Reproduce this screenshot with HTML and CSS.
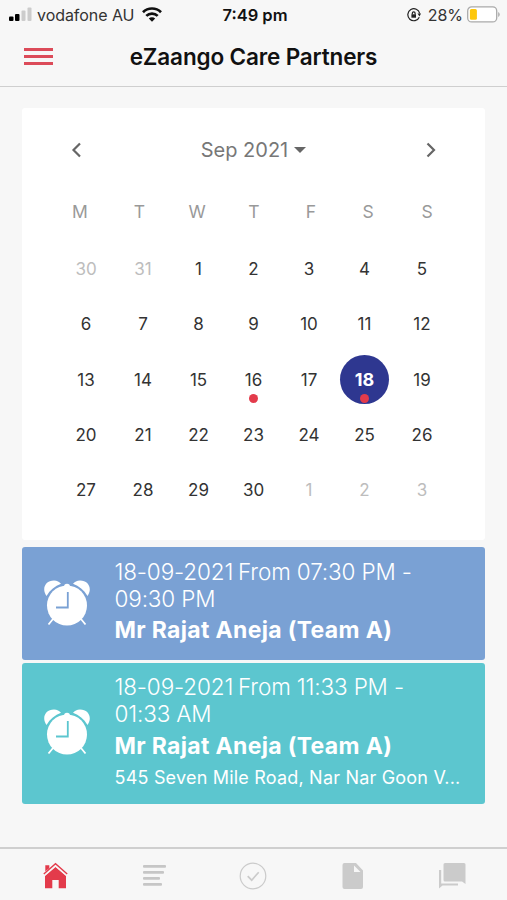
FILE: index.html
```html
<!DOCTYPE html>
<html lang="en">
<head>
<meta charset="utf-8">
<title>eZaango Care Partners</title>
<link rel="stylesheet" href="styles.css">
</head>
<body>
<svg class="defs" width="0" height="0" aria-hidden="true">
  <symbol id="alarm" viewBox="0 0 48 48">
    <path fill="#fff" d="M3.500 16C-1.500 9 2 .5 11 .5c3 0 5.500 1.300 7 3.300C12 6 7 10 3.500 16zM44.500 16C49.500 9 46 .5 37 .5c-3 0-5.500 1.300-7 3.300C36 6 41 10 44.500 16z"/>
    <circle cx="24" cy="25.500" r="20" fill="#fff"/>
    <path fill="#fff" d="M21 6.700a3 3 0 0 1 6 0z"/>
    <path stroke="#fff" stroke-width="1.800" fill="none" d="M10 39l-4.500 5.500M38 39l4.500 5.500"/>
    <path stroke="currentColor" stroke-width="1.800" fill="none" d="M24.800 12v15.500H13"/>
  </symbol>
</svg>
<div class="status">
  <div class="carrier">
    <svg width="24" height="15" viewBox="0 0 24 15"><rect x="0" y="9.500" width="4.500" height="4.500" rx="1"/><rect x="6" y="7" width="4.500" height="7" rx="1"/><rect x="12.500" y="3.500" width="4" height="10.500" rx="1" fill="#ccc"/><rect x="18.500" y=".5" width="4" height="13.500" rx="1" fill="#ccc"/></svg>
    <span class="carrier-name">vodafone AU</span>
    <svg width="20" height="15" viewBox="0 0 20 15" fill="none" stroke="#111" stroke-width="2.700"><path d="M1 5.200a12.800 12.800 0 0 1 18 0M4.300 8.900a8.100 8.100 0 0 1 11.400 0"/><path stroke="none" fill="#111" d="M6.800 11.500a4.600 4.600 0 0 1 6.400 0L10 14.800z"/></svg>
  </div>
  <span class="time">7:49 pm</span>
  <div class="power">
    <svg width="14" height="14" viewBox="0 0 14 14" fill="none" stroke="#222" stroke-width="1.200"><path d="M12.300 9.200A6 6 0 1 1 12.700 5.500"/><path d="M10.500 5.500h3.500l-1.500 3z" fill="#222" stroke="none"/><path d="M5.300 6.500V5.300a1.400 1.400 0 0 1 2.800 0v1.200"/><rect x="4.400" y="6.300" width="4.600" height="3.400" fill="#222" stroke="none"/></svg>
    <span class="percent">28%</span>
    <svg class="battery" width="34" height="17" viewBox="0 0 34 17"><rect x=".7" y=".9" width="29" height="15" rx="4" fill="#fff" stroke="#aaa" stroke-width="1.300"/><rect x="2.900" y="3.100" width="7" height="10.600" rx="1.500" fill="#fdc70c"/><path d="M31.200 6v5q1.500-.8 1.500-2.500T31.200 6z" fill="#aaa"/></svg>
  </div>
</div>
<header class="nav">
  <div class="menu"><i></i><i></i><i></i></div>
  <h1>eZaango Care Partners</h1>
</header>
<main>
  <section class="calendar">
    <div class="month">
      <svg width="12" height="18" viewBox="0 0 12 18" class="chev"><path d="M10 2.500L3.500 9l6.500 6.500"/></svg>
      <div class="month-name"><span>Sep 2021</span><svg width="12" height="6" viewBox="0 0 12 6"><path d="M0 0h12L6 6z" fill="#666"/></svg></div>
      <svg width="12" height="18" viewBox="0 0 12 18" class="chev"><path d="M2.500 2.500L9 9l-6.500 6.500"/></svg>
    </div>
    <div class="week"><span>M</span><span>T</span><span>W</span><span>T</span><span>F</span><span>S</span><span>S</span></div>
    <div class="days">
      <span class="out">30</span><span class="out">31</span><span>1</span><span>2</span><span>3</span><span>4</span><span>5</span>
      <span>6</span><span>7</span><span>8</span><span>9</span><span>10</span><span>11</span><span>12</span>
      <span>13</span><span>14</span><span>15</span><span class="marked">16</span><span>17</span><span class="marked"><b>18</b></span><span>19</span>
      <span>20</span><span>21</span><span>22</span><span>23</span><span>24</span><span>25</span><span>26</span>
      <span>27</span><span>28</span><span>29</span><span>30</span><span class="out">1</span><span class="out">2</span><span class="out">3</span>
    </div>
  </section>
  <article class="event blue">
    <svg class="alarm" width="48" height="48"><use href="#alarm"/></svg>
    <div class="info">
      <p class="when"><span class="date">18-09-2021</span> From 07:30 PM -<br>09:30 PM</p>
      <p class="who">Mr Rajat Aneja (Team A)</p>
    </div>
  </article>
  <article class="event teal">
    <svg class="alarm" width="48" height="48"><use href="#alarm"/></svg>
    <div class="info">
      <p class="when"><span class="date">18-09-2021</span> From 11:33 PM -<br>01:33 AM</p>
      <p class="who">Mr Rajat Aneja (Team A)</p>
      <p class="where">545 Seven Mile Road, Nar Nar Goon V...</p>
    </div>
  </article>
</main>
<nav class="tabs">
  <svg width="26" height="28" viewBox="0 0 26 28" fill="#e33b4b"><path d="M3.300 9.500V3.300h4v3zM13.500 5L24 14v12.200h-7.300V18h-6.400v8.200H3V14z"/><path fill="none" stroke="#f7f7f7" stroke-width="2.600" d="M2 12.800L13.500 2.900 25 12.800"/><path fill="none" stroke="#e33b4b" stroke-width="1.400" d="M1.800 12L13.500 1.800 25.200 12"/></svg>
  <svg width="26" height="28" viewBox="0 0 26 28" fill="#c6c6c6"><rect x="2" y="3" width="23" height="2.700" rx="1"/><rect x="2" y="9" width="21" height="2.700" rx="1"/><rect x="2" y="15" width="17" height="2.700" rx="1"/><rect x="2" y="21" width="19" height="2.700" rx="1"/></svg>
  <svg width="28" height="28" viewBox="0 0 28 28" fill="none" stroke="#cbcbcb"><circle cx="14" cy="14" r="12.800" stroke-width="1.200"/><path d="M8.700 14.200l4 4 7-8" stroke-width="1.700"/></svg>
  <svg width="26" height="28" viewBox="0 0 26 28"><path fill="#cbcbcb" fill-rule="evenodd" d="M4.500 1H16l7 7.500V25q0 2-2 2H4.500q-2 0-2-2V3q0-2 2-2zM14 3.500V10h6.500z"/></svg>
  <svg width="28" height="28" viewBox="0 0 28 28" fill="#cbcbcb"><path d="M7 1h19q1.500 0 1.500 1.500V22L24 19.500H7q-1.500 0-1.500-1.500V2.500Q5.500 1 7 1z"/><path d="M1 8h2.200v13.500H20v2H4.500L1 26.500z"/></svg>
</nav>
</body>
</html>
```

FILE: styles.css
```css
* { box-sizing: border-box; }
body {
  margin: 0;
  width: 507px;
  height: 900px;
  overflow: hidden;
  display: flex;
  flex-direction: column;
  background: #f7f7f7;
  color: #111;
  font-family: Inter, "Liberation Sans", sans-serif;
}
p, h1 { margin: 0; }
.defs { position: absolute; }
.status {
  height: 29px;
  display: grid;
  grid-template-columns: 1fr auto 1fr;
  align-items: center;
  padding: 0 6px 0 9px;
  white-space: nowrap;
}
.carrier, .power { display: flex; align-items: center; }
.power { justify-content: flex-end; }
.carrier-name { margin: 0 8px 0 4px; font-size: 16px; color: #333; letter-spacing: -.05px; }
.time { font-size: 16.500px; font-weight: 600; }
.percent { margin: 0 4px 0 7px; font-size: 16px; color: #333; }
.nav {
  height: 58px;
  display: grid;
  grid-template-columns: 83px 1fr 83px;
  border-bottom: 1.500px solid #cfcfcf;
  padding-bottom: 2px;
  align-items: center;
}
.menu { display: flex; flex-direction: column; gap: 4.500px; padding-left: 24px; }
.menu i { width: 29px; height: 2.700px; background: #dc4b59; }
h1 { text-align: center; font-size: 22.500px; font-weight: 600; white-space: nowrap; letter-spacing: -.15px; }
main { flex: 1; padding: 21px 22px 0; }
.calendar { height: 432px; background: #fff; border-radius: 3px; padding-top: 27px; }
.month { height: 30px; display: flex; align-items: center; justify-content: space-between; padding: 0 48px; }
.month-name { display: flex; align-items: center; gap: 6px; font-size: 20px; color: #777; }
.chev { fill: none; stroke: #666; stroke-width: 2.200; }
.week {
  display: grid;
  grid-template-columns: 58px 61px 54px 60px 54px 60px 58px;
  margin: 37px 0 0 29px;
  line-height: 20px;
  font-size: 17.500px;
  text-align: center;
  color: #999;
}
.days {
  display: grid;
  grid-template-columns: 57px 57px 54px 56px 55px 56px 59px;
  grid-auto-rows: 55.300px;
  margin: 19.400px 0 0 35.500px;
  font-size: 17px;
  color: #333;
}
.days span { display: flex; align-items: center; justify-content: center; position: relative; }
.days .out { color: #bdbdbd; }
.days b {
  width: 49px;
  height: 49px;
  line-height: 50px;
  font-size: 18px;
  border-radius: 50%;
  text-align: center;
  background: #2e3790;
  color: #fff;
  font-weight: 700;
}
.marked::after {
  content: "";
  position: absolute;
  left: calc(50% - 4.500px);
  top: 42px;
  width: 9px;
  height: 9px;
  border-radius: 50%;
  background: #e33b4b;
}
.event { display: flex; align-items: center; border-radius: 3px; padding-left: 21px; color: #fff; }
.blue { height: 113px; margin-top: 7px; background: #7aa1d4; }
.teal { height: 141.500px; margin-top: 2.500px; background: #5cc6cf; }
.alarm { flex: none; }
.blue .alarm { color: #7aa1d4; }
.teal .alarm { color: #5cc6cf; }
.info { margin-left: 23.500px; white-space: nowrap; align-self: flex-start; padding-top: 10.500px; }
.when { font-size: 22.500px; line-height: 27px; font-weight: 300; letter-spacing: -.14px; }
.date { margin-right: -1.300px; }
.who { margin-top: 4.500px; font-size: 23px; line-height: 28px; font-weight: 700; letter-spacing: .33px; }
.where { margin-top: 5px; font-size: 18px; line-height: 25px; letter-spacing: .2px; }
.tabs {
  height: 53px;
  border-top: 2px solid #cfcfcf;
  display: flex;
  justify-content: space-between;
  padding: 13px 41px 0 42px;
}
```
